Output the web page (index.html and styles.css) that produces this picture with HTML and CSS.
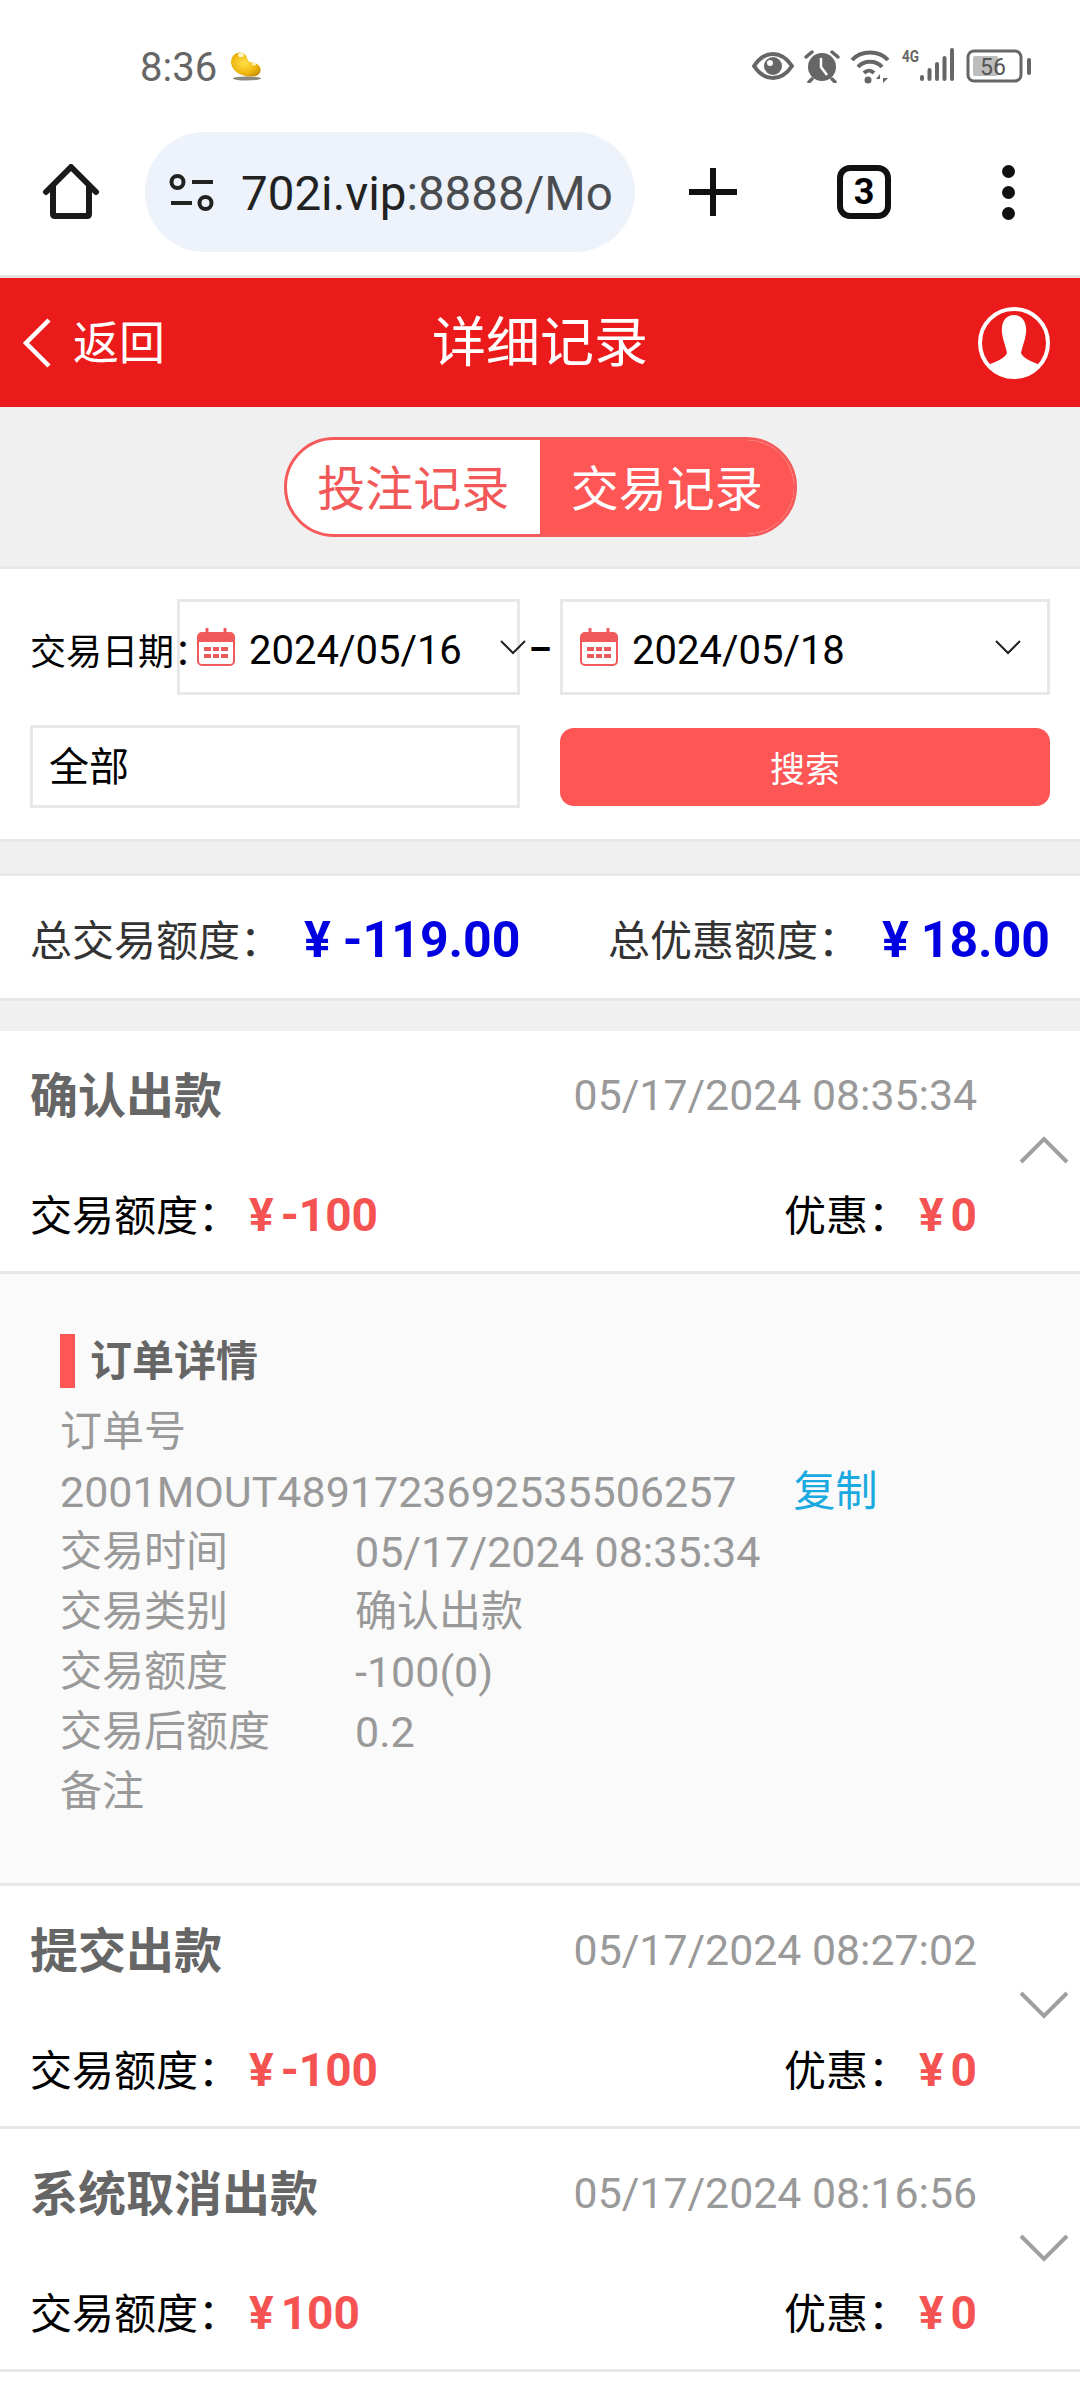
FILE: index.html
```html
<!DOCTYPE html>
<html lang="zh-CN">
<head>
    <meta charset="UTF-8">
    <meta name="viewport" content="width=device-width, initial-scale=1.0">
    <title>详细记录</title>
    <link rel="stylesheet" href="styles.css">
</head>
<body>
    <div class="status-bar">
        <span class="clock">8:36</span>
        <svg class="bean" width="34" height="30" viewBox="0 0 34 30">
            <defs>
                <radialGradient id="beanFill" cx="0.45" cy="0.45" r="0.7">
                    <stop offset="0" stop-color="#ffe14a"/>
                    <stop offset="0.6" stop-color="#efb60e"/>
                    <stop offset="1" stop-color="#b98604"/>
                </radialGradient>
            </defs>
            <ellipse cx="18" cy="27.5" rx="14" ry="2" fill="#8a8a80"/>
            <path d="M2 12C2 3 9 0 14 2C19 4 17 9 21 11C24 12 26 11 28 13C33 16 33 23 27 25C19 27 4 24 2 12Z" fill="url(#beanFill)"/>
            <ellipse cx="12" cy="4" rx="3" ry="2" fill="#fff6c8"/>
            <ellipse cx="25" cy="13" rx="2" ry="1.5" fill="#fff6c8"/>
        </svg>
        <div class="status-icons">
            <svg width="42" height="30" viewBox="0 0 42 30">
                <path d="M2 15C8 6 14 3 21 3S34 6 40 15C34 24 28 27 21 27S8 24 2 15Z" fill="none" stroke="#666" stroke-width="4"/>
                <circle cx="21" cy="15" r="9" fill="#666"/>
                <circle cx="18" cy="12" r="3" fill="#fff"/>
            </svg>
            <svg width="36" height="34" viewBox="0 0 36 34">
                <circle cx="18" cy="18" r="14" fill="#666"/>
                <path d="M17 9V18L23 26" fill="none" stroke="#fff" stroke-width="2.5"/>
                <path d="M2 8L8 3M34 8L28 3M8 30L5 33M28 30L31 33" stroke="#666" stroke-width="3.5" stroke-linecap="round"/>
            </svg>
            <svg width="40" height="36" viewBox="0 0 40 36">
                <path d="M2 12C11 2 29 2 38 12M8 19C14 12 26 12 32 19M14 25C17 22 21 22 24 25" fill="none" stroke="#666" stroke-width="4"/>
                <circle cx="18" cy="32" r="3.5" fill="#666"/>
                <path d="M30 26L26 31H30ZM33 26V35L38 30H33Z" fill="#666"/>
            </svg>
            <svg class="signal" width="56" height="40" viewBox="0 -2 56 40">
                <text x="2" y="14" class="net-label" textLength="17" lengthAdjust="spacingAndGlyphs">4G</text>
                <rect x="20" y="27" width="4" height="6" rx="2" fill="#666"/>
                <rect x="27.5" y="20" width="4" height="13" rx="2" fill="#666"/>
                <rect x="35" y="14" width="4" height="19" rx="2" fill="#666"/>
                <rect x="42.5" y="8" width="4" height="25" rx="2" fill="#666"/>
                <rect x="50" y="0" width="4" height="33" rx="2" fill="#666"/>
            </svg>
            <svg width="66" height="36" viewBox="0 0 66 36">
                <rect x="2" y="3" width="53" height="30" rx="6" fill="none" stroke="#666" stroke-width="3"/>
                <rect x="7" y="8" width="25" height="20" rx="2" fill="#bdbdbd"/>
                <text x="14" y="27" class="battery-label">56</text>
                <rect x="61" y="10" width="4" height="17" rx="2" fill="#666"/>
            </svg>
        </div>
    </div>

    <div class="browser-bar">
        <svg class="home-icon" width="58" height="56" viewBox="0 0 58 56">
            <path d="M4 28L29 3L54 28M11 22V50C11 52 12 52 13 52H45C46 52 47 52 47 50V22" fill="none" stroke="#1a1a1a" stroke-width="6" stroke-linecap="round" stroke-linejoin="round"/>
        </svg>
        <div class="url-pill">
            <svg width="46" height="40" viewBox="0 0 46 40">
                <circle cx="9.5" cy="10" r="6" fill="none" stroke="#222" stroke-width="4"/>
                <path d="M24 10H45M3 31H24" stroke="#222" stroke-width="4"/>
                <circle cx="37.5" cy="31" r="6" fill="none" stroke="#222" stroke-width="4"/>
            </svg>
            <span class="url-text">702i.vip<span class="url-rest">:8888/Mo</span></span>
        </div>
        <svg class="plus-icon" width="48" height="48" viewBox="0 0 48 48">
            <path d="M24 1V47M1 24H47" stroke="#111" stroke-width="6" stroke-linecap="round"/>
        </svg>
        <div class="tab-count">3</div>
        <div class="more-dots"><i></i><i></i><i></i></div>
    </div>

    <div class="page-header">
        <div class="back">
            <svg width="30" height="50" viewBox="0 0 30 50">
                <path d="M27 2L4 25L27 48" fill="none" stroke="#fff" stroke-width="4.5"/>
            </svg>
            <span class="back-text">返回</span>
        </div>
        <div class="page-title">详细记录</div>
        <svg class="avatar" width="72" height="72" viewBox="0 0 72 72">
            <defs>
                <clipPath id="avatarClip"><circle cx="36" cy="36" r="34"/></clipPath>
            </defs>
            <circle cx="36" cy="36" r="34" fill="#ec1b1b"/>
            <path clip-path="url(#avatarClip)" d="M36 8C45 8 49 16 48 26C47 34 44 40 43 46C45 52 56 55 66 60V72H6V60C16 55 27 52 29 46C28 40 25 34 24 26C23 16 27 8 36 8Z" fill="#fff"/>
            <circle cx="36" cy="36" r="34" fill="none" stroke="#fff" stroke-width="4"/>
        </svg>
    </div>

    <div class="tabs-area">
        <div class="tabs">
            <div class="tab">投注记录</div>
            <div class="tab tab-active">交易记录</div>
        </div>
    </div>

    <div class="filter-panel">
        <div class="filter-row">
            <div class="date-side">
                <span class="date-label">交易日期：</span>
                <div class="date-box">
                    <svg class="cal-icon" width="38" height="38" viewBox="0 0 38 38"><use href="#calendar"/></svg>
                    <span class="date-text">2024/05/16</span>
                    <svg class="date-arrow date-arrow-edge" width="28" height="16" viewBox="0 0 28 16"><path d="M2 2L14 14L26 2" fill="none" stroke="#222" stroke-width="2"/></svg>
                </div>
            </div>
            <span class="date-dash">–</span>
            <div class="date-box date-box-end">
                <svg class="cal-icon" width="38" height="38" viewBox="0 0 38 38">
                    <symbol id="calendar" viewBox="0 0 38 38">
                        <rect x="1" y="5" width="36" height="32" rx="4" fill="#fff" stroke="#f05a5a" stroke-width="2"/>
                        <path d="M1 9C1 6 3 5 5 5H33C35 5 37 6 37 9V14H1Z" fill="#f05a5a"/>
                        <path d="M10 1V9M28 1V9" stroke="#f05a5a" stroke-width="3" stroke-linecap="round"/>
                        <path d="M7 19H14V23H7ZM16 19H22V23H16ZM24 19H31V23H24ZM7 26H14V30H7ZM16 26H22V30H16ZM24 26H31V30H24Z" fill="#e95a5a"/>
                    </symbol>
                    <use href="#calendar"/>
                </svg>
                <span class="date-text">2024/05/18</span>
                <svg class="date-arrow" width="28" height="16" viewBox="0 0 28 16"><path d="M2 2L14 14L26 2" fill="none" stroke="#222" stroke-width="2"/></svg>
            </div>
        </div>
        <div class="filter-row filter-row-second">
            <div class="type-select">全部</div>
            <button class="search-btn">搜索</button>
        </div>
    </div>

    <div class="totals">
        <div class="total-part">
            <span class="total-label">总交易额度：</span>
            <span class="total-amount"><span class="yen">¥</span>-119.00</span>
        </div>
        <div class="total-part">
            <span class="total-label">总优惠额度：</span>
            <span class="total-amount"><span class="yen">¥</span>18.00</span>
        </div>
    </div>

    <div class="record">
        <div class="record-head">
            <span class="record-title">确认出款</span>
            <span class="record-time">05/17/2024 08:35:34</span>
        </div>
        <div class="record-toggle">
            <svg width="50" height="28" viewBox="0 0 50 28"><path d="M2 26L25 3L48 26" fill="none" stroke="#a0a0a0" stroke-width="4"/></svg>
        </div>
        <div class="record-money">
            <span>交易额度：<b class="money"><span class="yen-small">¥</span>-100</b></span>
            <span>优惠：<b class="money"><span class="yen-small">¥</span>0</b></span>
        </div>
    </div>

    <div class="order-detail">
        <div class="detail-title">订单详情</div>
        <div class="detail-line">订单号</div>
        <div class="detail-line">
            <span class="detail-num">2001MOUT4891723692535506257</span>
            <span class="copy-link">复制</span>
        </div>
        <div class="detail-line"><span class="detail-key">交易时间</span><span class="detail-num">05/17/2024 08:35:34</span></div>
        <div class="detail-line"><span class="detail-key">交易类别</span><span>确认出款</span></div>
        <div class="detail-line"><span class="detail-key">交易额度</span><span class="detail-num">-100(0)</span></div>
        <div class="detail-line"><span class="detail-key">交易后额度</span><span class="detail-num">0.2</span></div>
        <div class="detail-line">备注</div>
    </div>

    <div class="record">
        <div class="record-head">
            <span class="record-title">提交出款</span>
            <span class="record-time">05/17/2024 08:27:02</span>
        </div>
        <div class="record-toggle">
            <svg width="50" height="28" viewBox="0 0 50 28"><path d="M2 2L25 25L48 2" fill="none" stroke="#a0a0a0" stroke-width="4"/></svg>
        </div>
        <div class="record-money">
            <span>交易额度：<b class="money"><span class="yen-small">¥</span>-100</b></span>
            <span>优惠：<b class="money"><span class="yen-small">¥</span>0</b></span>
        </div>
    </div>

    <div class="record">
        <div class="record-head">
            <span class="record-title">系统取消出款</span>
            <span class="record-time">05/17/2024 08:16:56</span>
        </div>
        <div class="record-toggle">
            <svg width="50" height="28" viewBox="0 0 50 28"><path d="M2 2L25 25L48 2" fill="none" stroke="#a0a0a0" stroke-width="4"/></svg>
        </div>
        <div class="record-money">
            <span>交易额度：<b class="money"><span class="yen-small">¥</span>100</b></span>
            <span>优惠：<b class="money"><span class="yen-small">¥</span>0</b></span>
        </div>
    </div>
    <div class="page-end"></div>
</body>
</html>
```
FILE: styles.css
```css
* {
    box-sizing: border-box;
}
html, body {
    height: 2400px;
    overflow: hidden;
}
body {
    margin: 0;
    background: #f0f0f0;
    color: #000;
    font-family: Roboto, "Noto Sans CJK SC", sans-serif;
    font-size: 42px;
}

/* phone status bar */
.status-bar {
    display: flex;
    align-items: center;
    height: 132px;
    padding: 0 48px 0 140px;
    background: #fff;
}
.clock {
    margin-top: 2px;
    font-size: 40px;
    color: #666;
}
.bean {
    margin-left: 12px;
}
.status-icons {
    display: flex;
    align-items: center;
    gap: 10px;
    margin-left: auto;
}
.net-label {
    font-size: 17px;
    font-weight: 700;
    fill: #666;
}
.battery-label {
    font-size: 23px;
    fill: #555;
}

/* browser toolbar */
.browser-bar {
    display: flex;
    align-items: center;
    height: 146px;
    padding: 0 0 23px 42px;
    background: #fff;
    border-bottom: 3px solid #e6e0e0;
}
.url-pill {
    display: flex;
    align-items: center;
    width: 490px;
    height: 120px;
    margin-left: 45px;
    padding-left: 23px;
    background: #edf2fb;
    border-radius: 60px;
}
.url-text {
    margin-left: 27px;
    padding-top: 3px;
    font-size: 47.5px;
    color: #222;
    white-space: nowrap;
}
.url-rest {
    color: #4a4d50;
}
.plus-icon {
    margin-left: 54px;
}
.tab-count {
    display: flex;
    align-items: center;
    justify-content: center;
    width: 54px;
    height: 54px;
    margin-left: 100px;
    border: 6px solid #111;
    border-radius: 13px;
    font-size: 36px;
    font-weight: 700;
}
.more-dots {
    display: flex;
    flex-direction: column;
    gap: 8px;
    margin-left: 111px;
}
.more-dots i {
    width: 13px;
    height: 13px;
    background: #111;
    border-radius: 50%;
}

/* red header */
.page-header {
    display: flex;
    align-items: center;
    justify-content: space-between;
    position: relative;
    height: 129px;
    padding: 0 30px 0 22px;
    background: #ec1b1b;
    color: #fff;
}
.back {
    display: flex;
    align-items: center;
    gap: 21px;
    font-size: 46px;
}
.back-text {
    padding-bottom: 8px;
}
.page-title {
    position: absolute;
    left: 0;
    right: 0;
    padding-bottom: 8px;
    text-align: center;
    font-size: 54px;
}

.tabs-area {
    display: flex;
    justify-content: center;
    align-items: center;
    height: 162px;
    border-bottom: 3px solid #e8e8e8;
}
.tabs {
    display: flex;
    width: 513px;
    height: 100px;
    border: 3px solid #f45a5a;
    border-radius: 50px;
    overflow: hidden;
    background: #fff;
}
.tab {
    flex: 1;
    text-align: center;
    line-height: 100px;
    font-size: 48px;
    color: #f25858;
}
.tab-active {
    background: #fe5555;
    color: #fff;
}

/* filter form */
.filter-panel {
    height: 273px;
    padding: 30px 30px 0;
    background: #fff;
    border-bottom: 3px solid #e8e8e8;
}
.filter-row {
    display: flex;
    align-items: center;
}
.filter-row-second {
    margin-top: 30px;
}
.date-side {
    display: flex;
    width: 490px;
}
.date-label {
    position: relative;
    z-index: 1;
    flex: none;
    width: 147px;
    height: 96px;
    padding-top: 6px;
    font-size: 36px;
    line-height: 96px;
    white-space: nowrap;
}
.date-box {
    display: flex;
    align-items: center;
    flex: 1;
    height: 96px;
    padding-left: 17px;
    border: 3px solid #e8e8e8;
}
.date-box-end {
    flex: none;
    width: 490px;
}
.date-text {
    margin-left: 14px;
    padding-top: 6px;
    font-size: 40px;
}
.date-arrow {
    margin-left: auto;
    margin-right: 25px;
}
.date-arrow-edge {
    margin-right: -10px;
}
.date-dash {
    width: 40px;
    padding-top: 6px;
    text-align: center;
    font-size: 36px;
    font-weight: 700;
}
.type-select {
    width: 490px;
    height: 83px;
    padding-left: 16px;
    border: 3px solid #e8e8e8;
    line-height: 80px;
    font-size: 40px;
}
.search-btn {
    width: 490px;
    height: 78px;
    margin-left: 40px;
    border: 0;
    border-radius: 14px;
    background: #fe5555;
    color: #fff;
    font-family: inherit;
    font-size: 35px;
}

/* totals */
.totals {
    display: flex;
    justify-content: space-between;
    align-items: center;
    height: 128px;
    margin-top: 31px;
    padding: 6px 30px 0;
    background: #fff;
    border-top: 3px solid #e8e8e8;
    border-bottom: 3px solid #e8e8e8;
}
.total-part {
    display: flex;
    align-items: center;
}
.total-label {
    padding-bottom: 6px;
    color: #333;
}
.total-amount {
    margin-left: 22px;
    font-size: 50px;
    font-weight: 700;
    color: #0000e0;
}
.yen {
    margin-right: 12px;
}

/* records */
.record {
    height: 243px;
    padding: 34px 103px 0 30px;
    background: #fff;
    border-bottom: 3px solid #e8e8e8;
}
.totals + .record {
    margin-top: 30px;
}
.record-head {
    display: flex;
    justify-content: space-between;
    align-items: center;
    height: 60px;
}
.record-title {
    margin-bottom: 6px;
    font-size: 48px;
    font-weight: 700;
    color: #666;
}
.record-time {
    font-size: 42.8px;
    color: #999;
}
.record-toggle {
    display: flex;
    justify-content: flex-end;
    align-items: center;
    height: 56px;
    margin-right: -92px;
    padding-bottom: 6px;
}
.record-money {
    display: flex;
    justify-content: space-between;
    align-items: center;
    height: 62px;
}
.money {
    margin-left: 9px;
    font-size: 46px;
    color: #f55252;
}
.yen-small {
    margin-right: 7px;
}

/* order detail */
.order-detail {
    height: 612px;
    padding: 60px 0 0 60px;
    background: #fafafa;
    border-bottom: 3px solid #e8e8e8;
    color: #999;
}
.detail-title {
    height: 54px;
    margin-bottom: 14px;
    padding-left: 15px;
    border-left: 15px solid #fe5555;
    line-height: 56px;
    font-size: 42px;
    font-weight: 700;
    color: #666;
}
.detail-line {
    display: flex;
    height: 60px;
    line-height: 60px;
}
.detail-key {
    width: 295px;
}
.detail-num {
    font-size: 43px;
}
.copy-link {
    margin-left: 57px;
    color: #1aa9e0;
}

.page-end {
    height: 40px;
    background: #fff;
}
```
